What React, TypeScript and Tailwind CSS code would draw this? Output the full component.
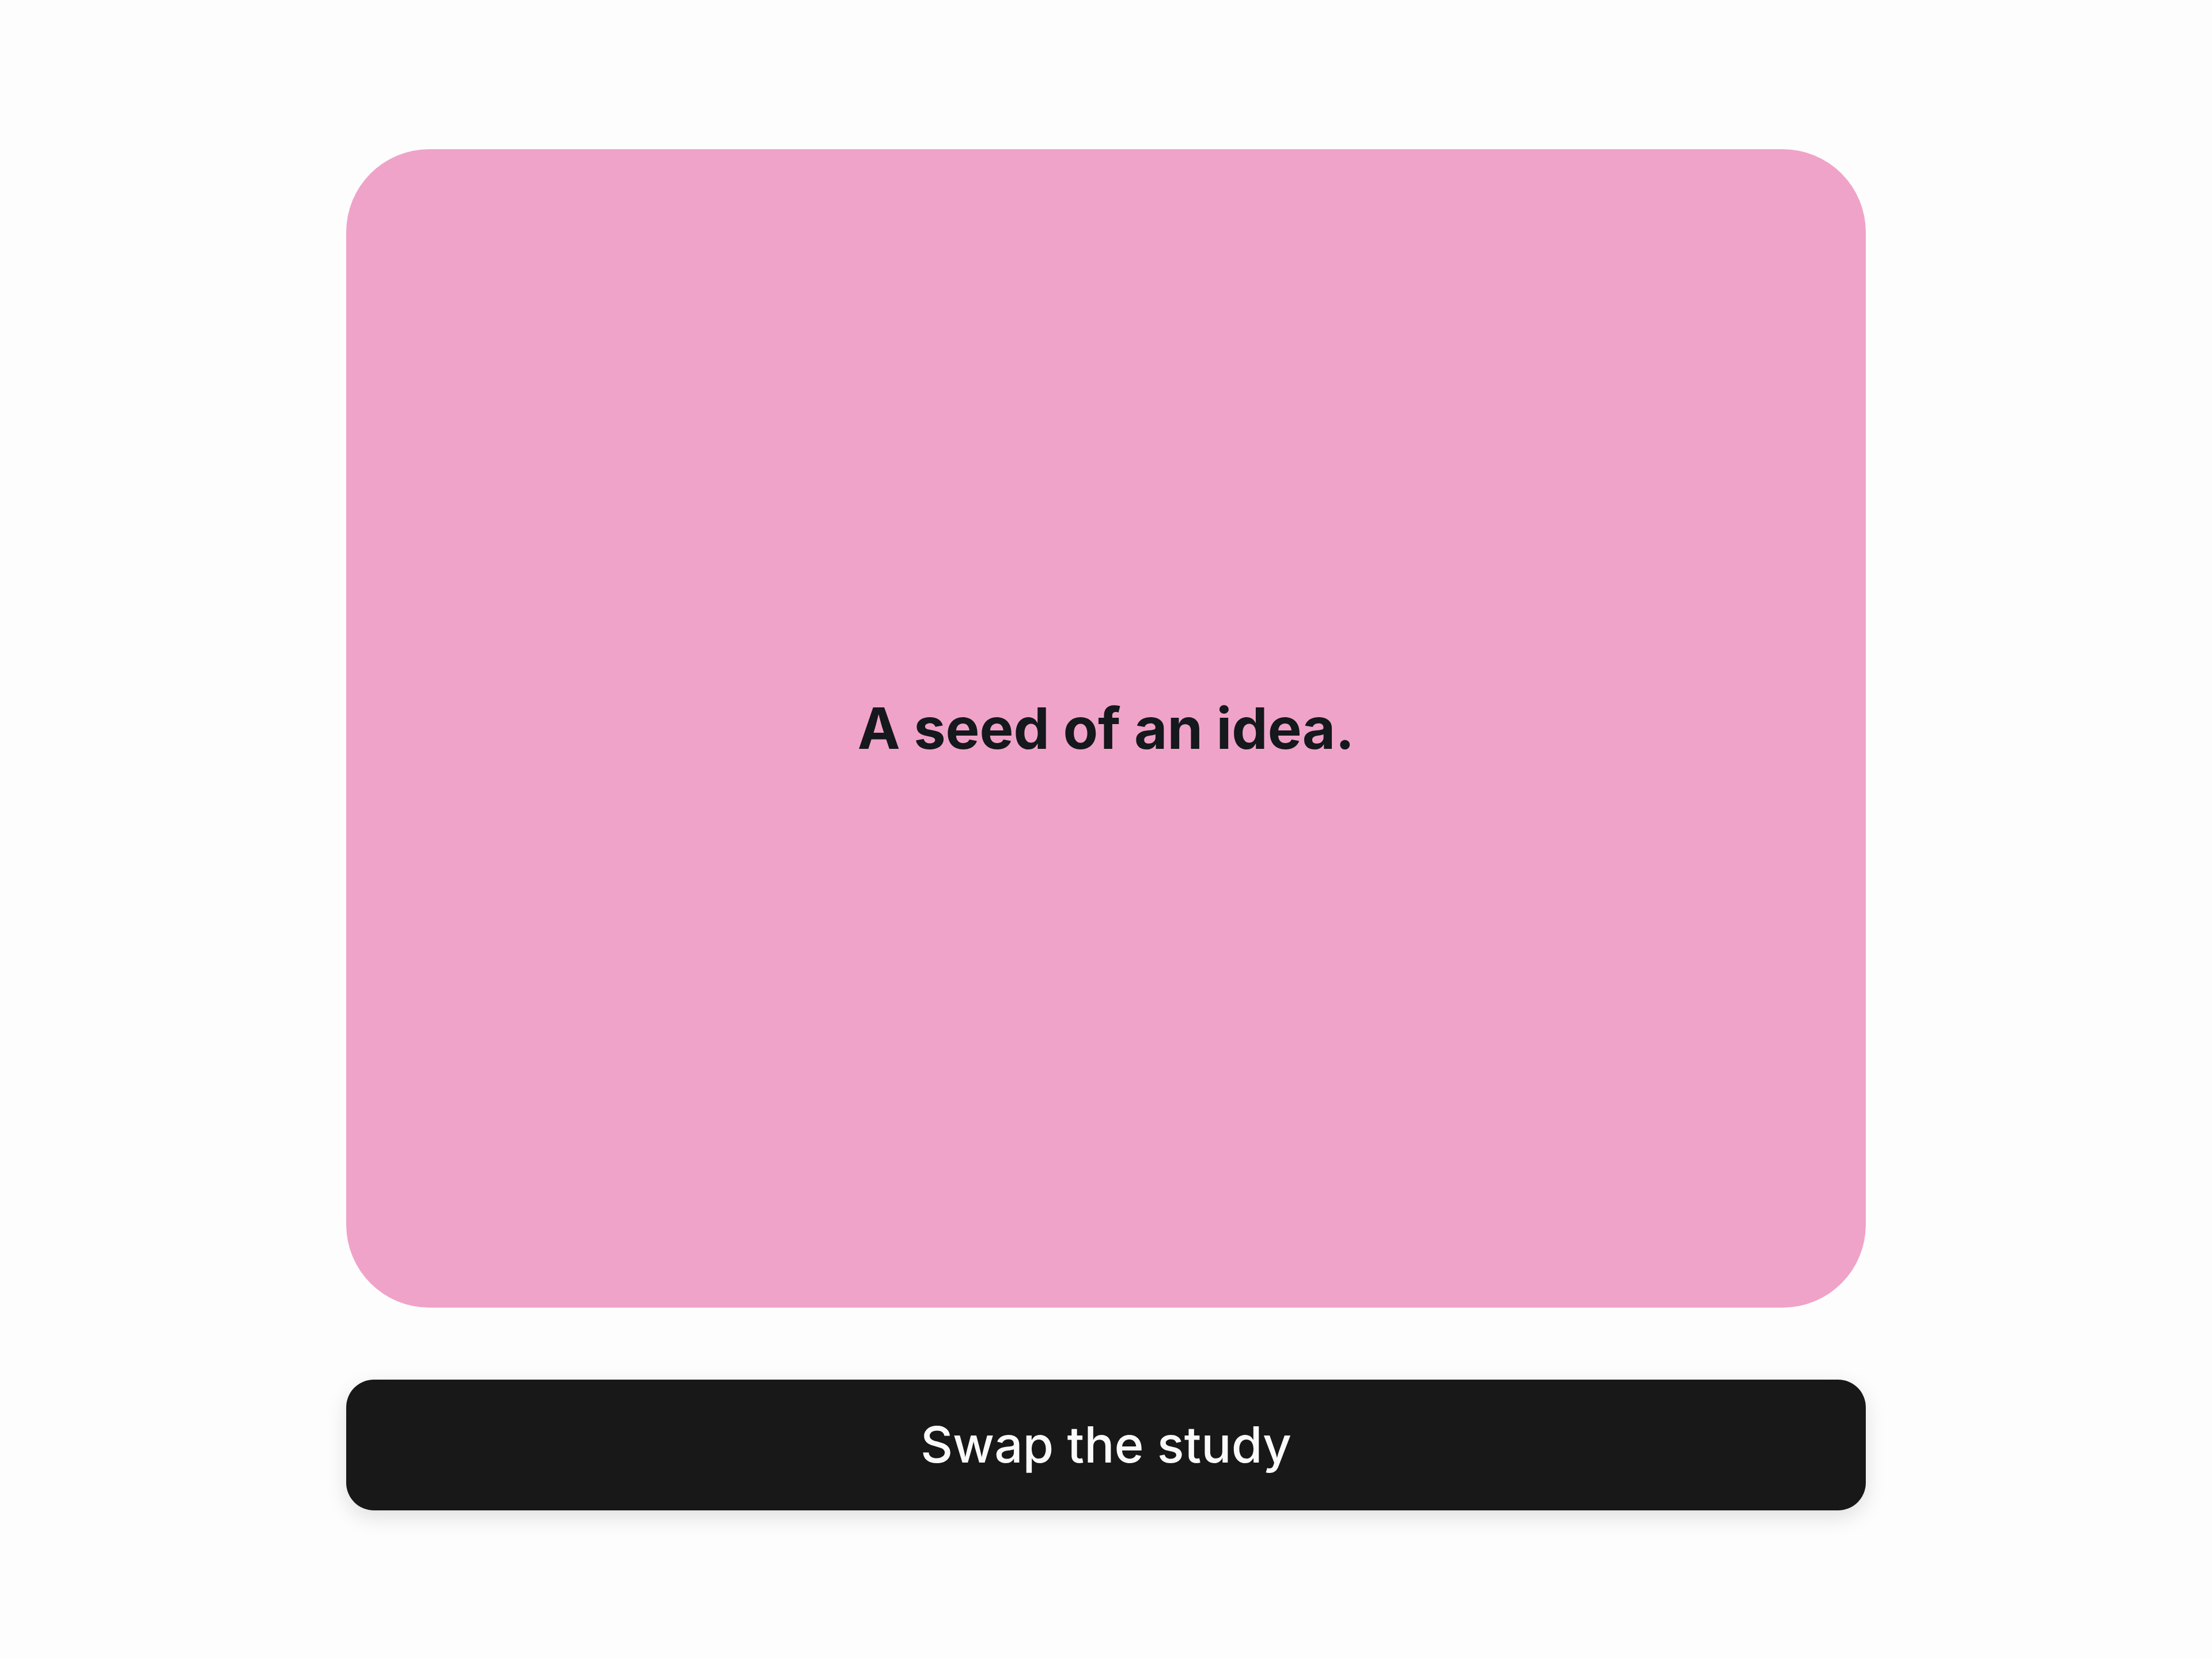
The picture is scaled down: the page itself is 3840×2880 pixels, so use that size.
export default function App() {
  return (
    <div className="min-h-screen w-full bg-[#fdfdfd] flex flex-col items-center justify-center gap-[125px] font-['Inter','Noto_Sans',sans-serif]">
      {/* Study card */}
      <div className="w-[2638px] h-[2011px] rounded-[144px] bg-[#f0a3c9] flex items-center justify-center">
        <h1 className="text-[99px] font-bold leading-none text-[#15181c]">
          A seed of an idea.
        </h1>
      </div>

      <button className="w-[2638px] h-[227px] rounded-[48px] bg-[#181818] text-[#fafafa] text-[87px] font-medium shadow-[0_12px_36px_rgba(0,0,0,0.12)]">
        Swap the study
      </button>
    </div>
  );
}
